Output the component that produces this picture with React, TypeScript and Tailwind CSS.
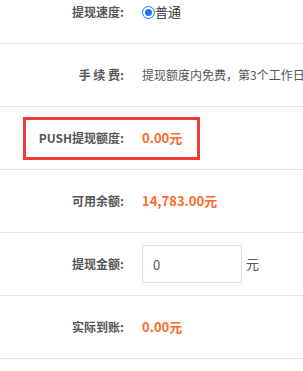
import { useState } from 'react';

const ROWS_FONT = { fontFamily: '"Noto Sans CJK SC", "Noto Sans", sans-serif' };

function Row({ label, children }: { label: string; children: React.ReactNode }) {
  return (
    <div className="flex items-center h-[63px] border-b border-[#e8e8e8]">
      <div className="w-[124px] shrink-0 text-right text-[12px] font-bold text-[#555] whitespace-pre">{label}</div>
      <div className="ml-[18px] flex items-center whitespace-nowrap">{children}</div>
    </div>
  );
}

export default function App() {
  const [amount, setAmount] = useState('0');

  return (
    <div className="w-[303px] h-[371px] overflow-hidden bg-white" style={ROWS_FONT}>
      <div className="-mt-[19px]">
        <Row label="提现速度:">
          <span className="flex items-center text-[13px] text-[#333]">
            <span className="w-[13px] h-[13px] rounded-full border-[1.5px] border-[#1677ff] flex items-center justify-center">
              <span className="w-[7px] h-[7px] rounded-full bg-[#1677ff]" />
            </span>
            普通
          </span>
        </Row>
        <Row label="手 续 费:">
          <span className="text-[12px] text-[#555]">提现额度内免费，第3个工作日到账</span>
        </Row>
        <div className="relative">
          <Row label="PUSH提现额度:">
            <span className="text-[13px] font-bold text-[#ff6a2b]">0.00元</span>
          </Row>
          {/* 标注框 */}
          <div className="absolute left-[23px] top-[10px] w-[177px] h-[43px] border-[3px] border-[#f23c3c]" />
        </div>
        <Row label="可用余额:">
          <span className="text-[13px] font-bold text-[#ff6a2b]">14,783.00元</span>
        </Row>
        <Row label="提现金额:">
          <input
            value={amount}
            onChange={(e) => setAmount(e.target.value)}
            className="w-[100px] h-[38px] border border-[#dcdcdc] px-[10px] text-[13px] text-[#555] outline-none"
          />
          <span className="ml-[4px] text-[13px] text-[#555]">元</span>
        </Row>
        <Row label="实际到账:">
          <span className="text-[13px] font-bold text-[#ff6a2b]">0.00元</span>
        </Row>
      </div>
    </div>
  );
}
